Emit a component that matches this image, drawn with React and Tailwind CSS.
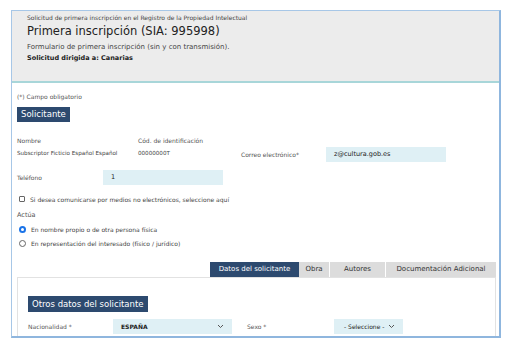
const font = { fontFamily: '"DejaVu Sans", "Liberation Sans", sans-serif' }

const Field = ({ children, className }) => (
  <div className={`flex items-center h-[15px] bg-[#dff0f5] px-[8px] text-[#222] whitespace-nowrap ${className}`}>{children}</div>
)

const Chevron = () => (
  <svg width="7" height="5" viewBox="0 0 7 5" className="ml-auto shrink-0">
    <path d="M1 1l2.5 2.5L6 1" fill="none" stroke="#555" strokeWidth="1" />
  </svg>
)

export default function App() {
  return (
    <div className="w-[510px] h-[347px] bg-white pt-[10px] pl-[11px]" style={font}>
      <div className="w-[490px] h-[328px] border border-[#a7c7e7] border-r-2 border-b-2 border-r-[#8fb6de] border-b-[#8fb6de] overflow-hidden flex flex-col">
        {/* Header */}
        <div className="h-[72px] bg-[#ececec] border-b-2 border-[#a8d6d9] px-[15px] pt-[2px] shrink-0">
          <div className="text-[6px] leading-[10px] text-[#444]">Solicitud de primera inscripción en el Registro de la Propiedad Intelectual</div>
          <div className="text-[11.5px] leading-[17px] text-[#222]">Primera inscripción (SIA: 995998)</div>
          <div className="text-[7px] leading-[12px] text-[#444] mt-[1px]">Formulario de primera inscripción (sin y con transmisión).</div>
          <div className="text-[6.5px] leading-[11px] font-bold text-[#222]">Solicitud dirigida a: Canarias</div>
        </div>

        {/* Body */}
        <div className="pl-[5px] pr-[3px] pt-[9px] flex-1 flex flex-col">
          <div className="text-[6px] leading-[9px] text-[#555]">(*) Campo obligatorio</div>
          <div className="mt-[6px] self-start bg-[#2d4a6f] text-white text-[8.5px] leading-[15px] px-[4px] h-[15px]">Solicitante</div>

          <div className="mt-[13px] flex items-start">
            <div className="w-[121px]">
              <div className="text-[6px] leading-[12px] text-[#555]">Nombre</div>
              <div className="text-[5.6px] leading-[12px] text-[#444]">Subscriptor Ficticio Español Español</div>
            </div>
            <div className="w-[103px]">
              <div className="text-[6px] leading-[12px] text-[#555]">Cód. de identificación</div>
              <div className="text-[5.6px] leading-[12px] text-[#444]">00000000T</div>
            </div>
            <div className="flex items-center mt-[12px] h-[15px]">
              <div className="w-[85px] text-[6px] text-[#555]">Correo electrónico*</div>
              <Field className="w-[120px] text-[6.5px] font-medium">z@cultura.gob.es</Field>
            </div>
          </div>

          <div className="mt-[8px] flex items-center">
            <div className="w-[86px] text-[6px] text-[#555]">Teléfono</div>
            <Field className="w-[120px] text-[6.5px] font-medium">1</Field>
          </div>

          <div className="mt-[9px] flex items-center h-[10px]">
            <div className="w-[6px] h-[6px] border border-[#666] rounded-[1px] ml-[2px] mr-[5px]" />
            <span className="text-[6px] text-[#444]">Si desea comunicarse por medios no electrónicos, seleccione aquí</span>
          </div>

          <div className="mt-[6px] text-[6.5px] leading-[10px] text-[#555]">Actúa</div>
          <div className="mt-[4px] flex items-center h-[10px]">
            <div className="w-[7px] h-[7px] rounded-full bg-[#1a73e8] ml-[2px] mr-[5px] flex items-center justify-center">
              <div className="w-[3px] h-[3px] rounded-full bg-white" />
            </div>
            <span className="text-[6px] text-[#444]">En nombre propio o de otra persona física</span>
          </div>
          <div className="mt-[4px] flex items-center h-[10px]">
            <div className="w-[7px] h-[7px] rounded-full border border-[#666] ml-[2px] mr-[5px]" />
            <span className="text-[6px] text-[#444]">En representación del interesado (físico / jurídico)</span>
          </div>

          {/* Tabs */}
          <div className="mt-[14px] flex justify-end">
            <div className="flex h-[15px] text-[7px] leading-[15px]">
              <div className="w-[89px] text-center bg-[#2d4a6f] text-white">Datos del solicitante</div>
              <div className="w-[31px] text-center bg-[#dcdcdc] text-[#333] border-r border-white">Obra</div>
              <div className="w-[56px] text-center bg-[#dcdcdc] text-[#333] border-r border-white">Autores</div>
              <div className="w-[110px] text-center bg-[#dcdcdc] text-[#333]">Documentación Adicional</div>
            </div>
          </div>
          <div className="flex-1 flex flex-col border border-b-0 border-[#e2e2e2] px-[10px] pt-[18px]">
            <div className="w-fit bg-[#2d4a6f] text-white text-[8.5px] leading-[16px] px-[4px] h-[16px]">Otros datos del solicitante</div>
            <div className="mt-[7px] flex items-center">
              <div className="w-[85px] text-[6px] text-[#555]">Nacionalidad *</div>
              <Field className="w-[119px] font-bold text-[6px]">ESPAÑA<Chevron /></Field>
              <div className="w-[102px] pl-[15px] text-[6px] text-[#555]">Sexo *</div>
              <Field className="w-[69px] text-[6px] pl-[10px]">- Seleccione -<Chevron /></Field>
            </div>
          </div>
        </div>
      </div>
    </div>
  )
}
